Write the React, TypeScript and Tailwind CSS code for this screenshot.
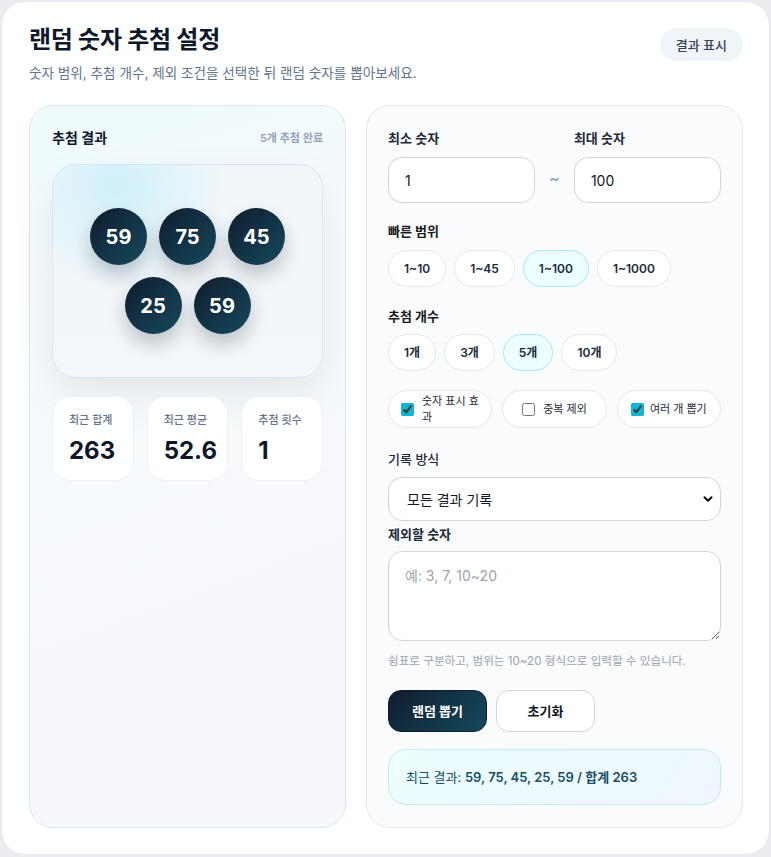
import { ChevronDown } from "lucide-react"

const balls = [59, 75, 45, 25, 59]

const ranges = [
  { label: "1~10", active: false },
  { label: "1~45", active: false },
  { label: "1~100", active: true },
  { label: "1~1000", active: false },
]

const counts = [
  { label: "1개", active: false },
  { label: "3개", active: false },
  { label: "5개", active: true },
  { label: "10개", active: false },
]

const stats = [
  { label: "최근 합계", value: "263" },
  { label: "최근 평균", value: "52.6" },
  { label: "추첨 횟수", value: "1" },
]

function Chip({ label, active }: { label: string; active: boolean }) {
  return (
    <button
      className={
        active
          ? "h-[37px] rounded-full border border-[#a5e9f5] bg-[#ecfeff] px-[15px] text-[12px] font-semibold leading-4 text-[#1e293b]"
          : "h-[37px] rounded-full border border-[#e5e7eb] bg-white px-[15px] text-[12px] font-semibold leading-4 text-[#1e293b]"
      }
    >
      {label}
    </button>
  )
}

export default function App() {
  return (
    <div className="min-h-screen bg-[#eaecef] p-px font-['Inter','Noto_Sans_CJK_KR',sans-serif] text-[#111827]">
      <div className="rounded-[24px] border border-[#e5e7eb] bg-white pb-[26px] pl-[27px] pr-[26px] pt-[23px]">
        <header className="flex items-start justify-between">
          <div>
            <h1 className="text-[24px] font-bold leading-[30px] tracking-[-0.01em] text-[#0f172a]">랜덤 숫자 추첨 설정</h1>
            <p className="mt-2 text-[13.6px] leading-5 text-[#64748b]">
              숫자 범위, 추첨 개수, 제외 조건을 선택한 뒤 랜덤 숫자를 뽑아보세요.
            </p>
          </div>
          <button className="mt-[3px] h-[33px] rounded-full bg-[#f1f5f9] px-4 text-[13px] font-medium leading-4 text-[#334155]">
            결과 표시
          </button>
        </header>

        <div className="mt-[22px] grid grid-cols-[317px_1fr] gap-5">
          {/* 추첨 결과 */}
          <section className="rounded-[24px] border border-[#dce8f0] bg-[linear-gradient(160deg,#eefbfd_0%,#f7fafc_30%,#f6f8fb_100%)] p-[22px]">
            <div className="flex items-center justify-between">
              <h2 className="text-[14px] font-semibold leading-5 text-[#0f172a]">추첨 결과</h2>
              <span className="text-[11px] font-semibold leading-4 text-[#94a3b8]">5개 추첨 완료</span>
            </div>

            <div className="mt-4 flex h-[214px] flex-wrap content-center items-center justify-center gap-3 rounded-[24px] border border-[#dbe5ee] bg-[radial-gradient(circle_at_24%_10%,rgba(196,238,248,0.7),transparent_38%),linear-gradient(180deg,#f0f6fa,#f3f6fa)] px-6 shadow-[0_18px_40px_rgba(15,23,42,0.08)]">
              {balls.map((n, i) => (
                <div
                  key={i}
                  className="flex h-[57px] w-[57px] items-center justify-center rounded-full bg-[linear-gradient(135deg,#0f1c2e,#16495c)] text-[20px] font-bold leading-none text-white shadow-[0_10px_18px_rgba(15,23,42,0.22)]"
                >
                  {n}
                </div>
              ))}
            </div>

            <div className="mt-[18px] grid grid-cols-3 gap-[13px]">
              {stats.map((s) => (
                <div key={s.label} className="h-[85px] rounded-[18px] border border-[#eef0f3] bg-white px-4 pt-[15px]">
                  <div className="text-[11px] font-medium leading-4 text-[#64748b]">{s.label}</div>
                  <div className="mt-2 text-[24px] font-bold leading-[30px] text-[#0f172a]">{s.value}</div>
                </div>
              ))}
            </div>
          </section>

          {/* 설정 */}
          <section className="rounded-[24px] border border-[#e5e7eb] bg-[#fafbfc] px-[21px] pb-[22px] pt-[23px]">
            <div className="grid grid-cols-[1fr_auto_1fr] items-end gap-x-[14px]">
              <div>
                <label className="block text-[13px] font-semibold leading-[18px] text-[#1f2937]">최소 숫자</label>
                <input
                  defaultValue="1"
                  className="mt-[10px] h-[46px] w-full rounded-[14px] border border-[#d1d5db] bg-white px-4 text-[14px] text-[#111827] outline-none"
                />
              </div>
              <span className="pb-[15px] text-[16px] font-semibold leading-5 text-[#94a3b8]">~</span>
              <div>
                <label className="block text-[13px] font-semibold leading-[18px] text-[#1f2937]">최대 숫자</label>
                <input
                  defaultValue="100"
                  className="mt-[10px] h-[46px] w-full rounded-[14px] border border-[#d1d5db] bg-white px-4 text-[14px] text-[#111827] outline-none"
                />
              </div>
            </div>

            <h3 className="mt-[19px] text-[13px] font-bold leading-[18px] text-[#1a1a1a]">빠른 범위</h3>
            <div className="mt-[10px] flex gap-2">
              {ranges.map((r) => (
                <Chip key={r.label} {...r} />
              ))}
            </div>

            <h3 className="mt-[20px] text-[13px] font-bold leading-[18px] text-[#1a1a1a]">추첨 개수</h3>
            <div className="mt-[9px] flex gap-2">
              {counts.map((c) => (
                <Chip key={c.label} {...c} />
              ))}
            </div>

            <div className="mt-[19px] grid grid-cols-3 gap-[10px]">
              <label className="flex h-[38px] items-center gap-2 rounded-full border border-[#e5e7eb] bg-white pl-3 pr-2 text-[11px] leading-4 text-[#1f2937]">
                <input type="checkbox" defaultChecked className="h-[13px] w-[13px] shrink-0 accent-[#0fb5d4]" />
                <span>숫자 표시 효과</span>
              </label>
              <label className="flex h-[38px] items-center justify-center gap-2 rounded-full border border-[#e5e7eb] bg-white px-2.5 text-[11px] leading-4 text-[#1f2937]">
                <input type="checkbox" className="h-[13px] w-[13px] shrink-0 accent-[#0fb5d4]" />
                <span>중복 제외</span>
              </label>
              <label className="flex h-[38px] items-center justify-center gap-1.5 rounded-full border border-[#e5e7eb] bg-white px-2.5 text-[11px] leading-4 text-[#1f2937]">
                <input type="checkbox" defaultChecked className="h-[13px] w-[13px] shrink-0 accent-[#0fb5d4]" />
                <span className="whitespace-nowrap">여러 개 뽑기</span>
              </label>
            </div>

            <h3 className="mt-[22px] text-[13px] font-medium leading-[18px] text-[#1f2937]">기록 방식</h3>
            <div className="relative mt-[9px]">
              <select className="h-[44px] w-full appearance-none rounded-[14px] border border-[#d1d5db] bg-white pl-[18px] text-[14px] text-[#111827] outline-none">
                <option>모든 결과 기록</option>
                <option>최근 결과만 기록</option>
              </select>
              <ChevronDown className="pointer-events-none absolute right-[6px] top-1/2 h-[14px] w-[14px] -translate-y-1/2 text-[#111]" strokeWidth={3.5} />
            </div>

            <h3 className="mt-1 text-[13px] font-semibold leading-[18px] text-[#1f2937]">제외할 숫자</h3>
            <textarea
              placeholder="예: 3, 7, 10~20"
              className="mt-2 block h-[90px] w-full rounded-[14px] border border-[#d1d5db] bg-white px-4 pt-[14px] text-[14px] leading-5 text-[#111827] outline-none placeholder:text-[#9ca3af]"
            />
            <p className="mt-[12px] text-[11.6px] leading-4 text-[#9ca3af]">
              쉼표로 구분하고, 범위는 10~20 형식으로 입력할 수 있습니다.
            </p>

            <div className="mt-[21px] flex gap-[9px]">
              <button className="h-[42px] w-[99px] rounded-[13px] border border-[#0f1c2e] bg-[linear-gradient(135deg,#0f1c2e,#16495c)] text-[13px] font-bold leading-4 text-white">
                랜덤 뽑기
              </button>
              <button className="h-[42px] w-[99px] rounded-[13px] border border-[#d1d5db] bg-white text-[13px] font-semibold leading-4 text-[#111827]">
                초기화
              </button>
            </div>

            <div className="mt-[17px] flex h-[56px] items-center rounded-[18px] border border-[#bfe9f7] bg-[linear-gradient(120deg,#ecfeff,#eff6ff)] px-[17px] text-[13px] leading-5 text-[#164e63]">
              <span>
                최근 결과: <span className="font-semibold">59, 75, 45, 25, 59 / 합계 263</span>
              </span>
            </div>
          </section>
        </div>
      </div>
    </div>
  )
}
